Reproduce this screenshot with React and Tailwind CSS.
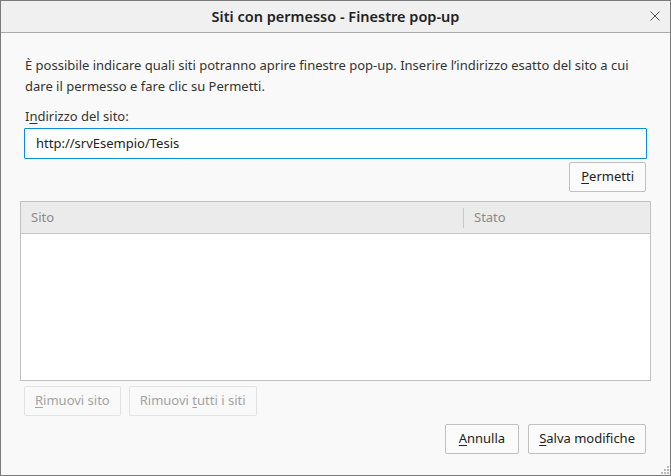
import React from "react";

// Underlined access-key letter
function Key({ children }) {
  return <span className="underline underline-offset-2">{children}</span>;
}

function Btn({ children, disabled, className = "" }) {
  return (
    <button
      className={`h-[30px] px-[10px] rounded-[2px] border text-[13px] ${
        disabled
          ? "border-[#e3e3e3] bg-[#f9f9f9] text-[#a3a3a3]"
          : "border-[#c1c1c1] bg-[#fbfbfb] text-[#222]"
      } ${className}`}
    >
      {children}
    </button>
  );
}

export default function App() {
  return (
    <div
      className="w-[671px] h-[476px] flex flex-col border border-[#7a7a7a] bg-[#f9f9f9] text-[#333] text-[13px]"
      style={{ fontFamily: '"Noto Sans", "Open Sans", sans-serif' }}
    >
      {/* Title bar */}
      <div className="relative h-[32px] shrink-0 flex items-center justify-center bg-[#f0f0f0] border-b border-[#aaa]">
        <span className="text-[14.5px] font-semibold text-[#222]">Siti con permesso - Finestre pop-up</span>
        <svg className="absolute right-[10px] top-[10px]" width="10" height="10" viewBox="0 0 10 10">
          <path d="M0.5 0.5 L9.5 9.5 M9.5 0.5 L0.5 9.5" stroke="#555" strokeWidth="1" />
        </svg>
      </div>

      {/* Body */}
      <div className="flex-1 flex flex-col px-[23px] pt-[22px]">
        <p className="leading-[21px] pl-[1px]">
          È possibile indicare quali siti potranno aprire finestre pop-up. Inserire l’indirizzo esatto del sito a cui
          dare il permesso e fare clic su Permetti.
        </p>

        <label className="mt-[9px] leading-[21px] pl-[1px]">
          I<Key>n</Key>dirizzo del sito:
        </label>
        <div className="mt-[1px] h-[31px] flex items-center px-[11px] bg-white border border-[#0a8fd8] rounded-[1px] text-[#222]">
          http://srvEsempio/Tesis
        </div>

        <div className="flex justify-end mt-[3px] pr-[1px]">
          <Btn className="px-[11px]">
            <Key>P</Key>ermetti
          </Btn>
        </div>

        {/* Table */}
        <div className="-mx-[4px] mt-[9px] h-[180px] flex flex-col border border-[#c1c1c1] bg-white">
          <div className="h-[32px] flex items-center bg-[#ebebeb] border-b border-[#c8c8c8] text-[#8a8a8a]">
            <div className="w-[443px] pl-[10px] border-r border-[#c8c8c8] h-[20px] flex items-center">Sito</div>
            <div className="pl-[10px]">Stato</div>
          </div>
        </div>

        <div className="flex gap-[8px] mt-[5px]">
          <Btn disabled className="px-[9px]">
            <Key>R</Key>imuovi sito
          </Btn>
          <Btn disabled className="px-[9px]">
            Rimuovi <Key>t</Key>utti i siti
          </Btn>
        </div>

        <div className="flex justify-end gap-[9px] mt-[8px] pr-[1px]">
          <Btn className="px-[13px]">
            <Key>A</Key>nnulla
          </Btn>
          <Btn className="px-[9px]">
            <Key>S</Key>alva modifiche
          </Btn>
        </div>
      </div>

      {/* Resize grip */}
      <div className="relative h-0">
        <svg className="absolute right-[1px] bottom-[1px]" width="8" height="8" viewBox="0 0 8 8">
          <rect x="6" y="0" width="2" height="2" fill="#bbb" />
          <rect x="3" y="3" width="2" height="2" fill="#bbb" />
          <rect x="6" y="3" width="2" height="2" fill="#bbb" />
          <rect x="0" y="6" width="2" height="2" fill="#bbb" />
          <rect x="3" y="6" width="2" height="2" fill="#bbb" />
          <rect x="6" y="6" width="2" height="2" fill="#bbb" />
        </svg>
      </div>
    </div>
  );
}
